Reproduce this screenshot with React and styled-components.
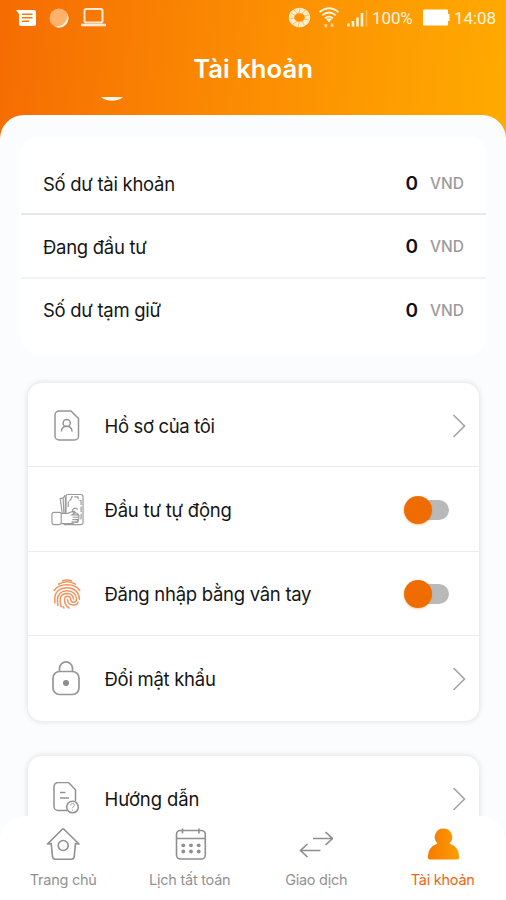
import React, { useState } from 'react';
import styled, { createGlobalStyle } from 'styled-components';

const balances = [
  { label: 'Số dư tài khoản', value: 0 },
  { label: 'Đang đầu tư', value: 0 },
  { label: 'Số dư tạm giữ', value: 0 },
];

const MessageIcon = () => (
  <svg width="20" height="18" viewBox="0 0 20 18" fill="none">
    <path d="M0 1h18q2 0 2 2v12q0 2-2 2H5q-2 0-2-2V5Z" fill="#fff" />
    <path d="M6 5.2h10.5M6 8.7h10.5M6 12.2h7" stroke="#f57a05" strokeWidth="1.5" />
  </svg>
);

const MoonIcon = () => (
  <svg width="20" height="20" viewBox="0 0 20 20">
    <circle cx="10" cy="10" r="9.5" fill="#ffb26c" />
    <path d="M18 5a9.5 9.5 0 0 1-13 13.2A11 11 0 0 0 18 5Z" fill="#fff1dc" />
  </svg>
);

const LaptopIcon = () => (
  <svg width="25" height="19" viewBox="0 0 25 19" fill="none" stroke="#ffe9d6">
    <rect x="3.5" y="1" width="18" height="13.5" rx="1.8" strokeWidth="2" />
    <path d="M0 17h25" strokeWidth="2.6" />
  </svg>
);

const RingIcon = () => (
  <svg width="23" height="21" viewBox="0 0 23 21" fill="none" stroke="#ffeccf">
    <ellipse cx="11.5" cy="10.5" rx="8" ry="7" strokeWidth="5.4" />
    <path
      d="M3 6l5 3M6 3l4 4M12 1l-1 5M17 3l-3 4M21 8l-5 1M21 13l-5-1M16 18l-2-4M10 20l1-5M5 17l4-3M2 12l5-1"
      stroke="#fba02a"
      strokeWidth="0.6"
    />
  </svg>
);

const WifiIcon = () => (
  <svg width="20" height="21" viewBox="0 0 20 21" fill="none" stroke="#fff3de" strokeWidth="1.8">
    <path d="M.5 5.2q9.5-8 19 0M3.3 8.3q6.7-5.5 13.4 0M6 11.2q4-3.2 8 0" />
    <path d="M6.8 11.5h6.4L10 15.5Z" fill="#fff" stroke="none" />
    <path d="M5.5 17.5l1.5 2 1-2M12 19.5l1-2 1.5 2" stroke="#ffd391" />
  </svg>
);

const SignalIcon = () => (
  <svg width="21" height="18" viewBox="0 0 21 18" fill="none" stroke="#fff3de" strokeWidth="2.6">
    <path d="M1.5 17.5v-3M6 17.5v-5.5M10.5 17.5V8.5M15 17.5V4" />
    <path d="M19.5 17.5V1" stroke="#ffb84a" strokeWidth="1.6" />
  </svg>
);

const BatteryIcon = () => (
  <svg width="27" height="17" viewBox="0 0 27 17" fill="#fff">
    <path d="M1 .5h23a1 1 0 0 1 1 1V5h1.500v7H25v3.500a1 1 0 0 1-1 1H1a1 1 0 0 1-1-1v-14a1 1 0 0 1 1-1Z" />
  </svg>
);

const ProfileIcon = () => (
  <svg width="34" height="34" viewBox="0 0 34 34" fill="none" stroke="#959595" strokeWidth="1.5">
    <path d="M9 2h12l7.5 7.5V27a4 4 0 0 1-4 4H9a4 4 0 0 1-4-4V6a4 4 0 0 1 4-4Z" />
    <circle cx="16.7" cy="14" r="3.6" />
    <path d="M11.3 22.5q.5-5.2 5.4-5.2t5.4 5.2" />
  </svg>
);

const MoneyIcon = () => (
  <svg width="33" height="34" viewBox="0 0 34 34" fill="none" stroke="#9a9a9a" strokeWidth="1.2">
    <path d="M15.5 20V3q0-2 2-2h13q2.5 0 2.5 2.5v26q0 2.5-2.5 2.5H13" />
    <path d="M17.8 14V7.5q3-.2 3.6-4h6.2q.5 3.800 3.400 4V26q-3 .4-3.500 3.500H22" strokeDasharray="6 1.5" />
    <path d="M14.5 1.5 12.5 5l.8 15M12 4.5l-2.5.8L11.5 20M14.8 3v17" />
    <path d="M27.5 16.5q-3-2.800-5 0-1.400 3.200 2.500 3.500 3.500.5 3 3.500" />
    <rect x="1" y="19.5" width="9.5" height="12.5" rx="2" />
    <path d="M10.5 20.5h7l4.500-2q2-.6 3 1l-3.500 2.500h6.700q1.500 1.200 0 2.500h-6M28 24.500q1.500 1.200 0 2.500h-6M27.500 27q1 1.500-.7 2.500H21M10.500 31h13" />
  </svg>
);

const FingerprintIcon = () => (
  <svg width="28" height="30" viewBox="0 0 28 30" fill="none" stroke="#f4925a" strokeWidth="1.5" strokeLinecap="round">
    <path d="M9.5 1.8q4.5-1.8 9 0M5.5 5.2q8.5-4.8 17 0" />
    <path d="M1.2 11.5Q5 5.8 14 5.8t12.8 5.7" />
    <path d="M1.8 24v-4.5C1.8 12.5 7 8.8 14 8.8s12.3 4.5 12.3 11.5" />
    <path d="M5 26.5q-.6-2.5-.5-6C4.8 15 8.5 11.7 14 11.7s9.5 3.5 9.5 8.3q0 3.2-2.8 3.2t-3.1-3.2q-.2-2.8-3.1-2.8t-3 3.5q.2 5.5 4.5 8.3" />
    <path d="M8.2 27.800q-1.800-5-.8-9 1.300-4.300 6.600-4.300 6 .2 6.500 5.500" />
    <path d="M14.5 20.500q.1 5.800 6.500 5.500 3 0 4-2.500M11 29q-.6-.8-.9-1.500" />
  </svg>
);

const LockIcon = () => (
  <svg width="34" height="36" viewBox="0 0 34 36" fill="none" stroke="#979797" strokeWidth="1.7">
    <rect x="3" y="10.5" width="26" height="23" rx="6.5" />
    <path d="M9.5 10.5V7.400a6.500 6.500 0 0 1 13 0v3.100" />
    <circle cx="16" cy="22" r="3" fill="#8c8c8c" stroke="none" />
  </svg>
);

const GuideIcon = () => (
  <svg width="34" height="34" viewBox="0 0 34 34" fill="none" stroke="#929292" strokeWidth="1.5">
    <path d="M17 28.500H8a4 4 0 0 1-4-4v-20a4 4 0 0 1 4-4h10.500l7 7.300V19" />
    <path d="M10 10.500h5.500M10 16h9" />
    <circle cx="22.500" cy="25" r="5.800" />
    <path d="M20.500 23.500q0-2 2-2t2 1.700q0 1.200-2 2.300v.7M22.500 27.500v1.200" strokeWidth="1" stroke="#aaa" />
  </svg>
);

const Chevron = () => (
  <svg width="14" height="26" viewBox="0 0 14 26" fill="none" stroke="#a3a3a3" strokeWidth="1.6">
    <path d="M1.5 2 12.5 13 1.5 24" />
  </svg>
);

const HomeIcon = () => (
  <svg width="34" height="34" viewBox="0 0 34 34" fill="none" stroke="#8f8f8f" strokeWidth="1.6" strokeLinejoin="round">
    <path d="M1.5 17 16.5 2q.6-.5 1.200 0L33 17l-3.500-.5-1.300 13q-.3 2.800-3 2.800H9.500q-2.700 0-3-2.800l-1.300-13Z" />
    <circle cx="17.2" cy="18.5" r="5" />
  </svg>
);

const CalendarIcon = () => (
  <svg width="34" height="34" viewBox="0 0 34 34" fill="none" stroke="#8f8f8f" strokeWidth="1.6">
    <rect x="3.5" y="3.5" width="28.8" height="28.5" rx="4" />
    <path d="M3.5 11.5h28.8M9.5 1.5v5M26 1.5v5" />
    <g fill="#8f8f8f" stroke="none">
      {[10.3, 18, 25.7].map((x) => (
        <React.Fragment key={x}>
          <circle cx={x} cy="18.3" r="1.9" />
          <circle cx={x} cy="24.5" r="1.9" />
        </React.Fragment>
      ))}
    </g>
  </svg>
);

const TransferIcon = () => (
  <svg width="34" height="34" viewBox="0 0 34 34" fill="none" stroke="#8f8f8f" strokeWidth="1.7">
    <path d="M14 11.500h19.500M26.500 5l7 6.500-7 6.500M21.500 23.500H2M8.500 17l-7 6.500 7 6.500" />
  </svg>
);

const UserIcon = () => (
  <svg width="34" height="34" viewBox="0 0 34 34">
    <defs>
      <linearGradient id="userFill" x1="0" x2="1">
        <stop offset="0" stopColor="#f57a00" />
        <stop offset="1" stopColor="#ff9d00" />
      </linearGradient>
    </defs>
    <path
      d="M17.500 1.500a8.700 8.700 0 0 0-6 15Q2 20 1.800 30q0 2.500 2.500 2.500h26.400q2.500 0 2.500-2.500-.2-10-9.700-13.500a8.700 8.700 0 0 0-6-15Z"
      fill="url(#userFill)"
    />
  </svg>
);

const AutoSwitch = ({ label }) => {
  const [on, setOn] = useState(false);
  return (
    <Track type="button" role="switch" aria-checked={on} aria-label={label} $on={on} onClick={() => setOn(!on)}>
      <Thumb />
    </Track>
  );
};

const App = () => (
  <Screen>
    <GlobalStyle />
    <Header>
      <StatusBar>
        <StatusLeft>
          <MessageIcon />
          <MoonIcon />
          <LaptopIcon />
        </StatusLeft>
        <StatusRight>
          <RingIcon />
          <WifiIcon />
          <SignalIcon />
          <StatusText $width="43px">100%</StatusText>
          <BatteryIcon />
          <StatusText $width="42px">14:08</StatusText>
        </StatusRight>
      </StatusBar>
      <Title>Tài khoản</Title>
      <AvatarEdge width="22" height="4" viewBox="0 0 22 4">
        <path d="M0 0h22Q18 3.800 11 3.800T0 0Z" fill="#fff3e4" />
      </AvatarEdge>
    </Header>

    <Sheet>
      <BalanceCard>
        {balances.map(({ label, value }) => (
          <BalanceRow key={label}>
            <Label>{label}</Label>
            <Amount>{value}</Amount>
            <Currency>VND</Currency>
          </BalanceRow>
        ))}
      </BalanceCard>

      <MenuCard>
        <MenuRow>
          <IconSlot><ProfileIcon /></IconSlot>
          <Label $spacing="-0.35px">Hồ sơ của tôi</Label>
          <Chevron />
        </MenuRow>
        <MenuRow>
          <IconSlot><MoneyIcon /></IconSlot>
          <Label $spacing="-0.2px">Đầu tư tự động</Label>
          <AutoSwitch label="Đầu tư tự động" />
        </MenuRow>
        <MenuRow>
          <IconSlot><FingerprintIcon /></IconSlot>
          <Label>Đăng nhập bằng vân tay</Label>
          <AutoSwitch label="Đăng nhập bằng vân tay" />
        </MenuRow>
        <MenuRow>
          <IconSlot><LockIcon /></IconSlot>
          <Label>Đổi mật khẩu</Label>
          <Chevron />
        </MenuRow>
      </MenuCard>

      <MenuCard>
        <MenuRow>
          <IconSlot><GuideIcon /></IconSlot>
          <Label $spacing="-0.1px">Hướng dẫn</Label>
          <Chevron />
        </MenuRow>
      </MenuCard>
    </Sheet>

    <TabBar>
      <Tab><HomeIcon />Trang chủ</Tab>
      <Tab><CalendarIcon />Lịch tất toán</Tab>
      <Tab><TransferIcon />Giao dịch</Tab>
      <Tab $active><UserIcon />Tài khoản</Tab>
    </TabBar>
  </Screen>
);

// --- STYLES ---

const GlobalStyle = createGlobalStyle`
  * { box-sizing: border-box; }
  body {
    margin: 0;
    font-family: Inter, Roboto, sans-serif;
  }
  svg { display: block; flex: none; }
`;

const Screen = styled.div`
  display: flex;
  flex-direction: column;
  width: 506px;
  height: 900px;
  overflow: hidden;
  background: linear-gradient(97deg, #f56c02 0%, #fb8a02 45%, #ffab00 100%) top / 100% 150px no-repeat #fafcfe;
`;

const Header = styled.header`
  flex: none;
  height: 115px;
`;

const StatusBar = styled.div`
  display: flex;
  justify-content: space-between;
  height: 35px;
  padding: 0 10px 0 16px;
`;

const StatusLeft = styled.div`
  display: flex;
  align-items: center;
  gap: 12.5px;
`;

const StatusRight = styled.div`
  display: flex;
  align-items: center;
  gap: 8px;
`;

const StatusText = styled.span`
  width: ${(p) => p.$width};
  margin-left: -4px;
  color: #fff3e0;
  font: 400 17px Roboto, sans-serif;
  letter-spacing: -0.1px;
  white-space: nowrap;
`;

const Title = styled.h1`
  margin: 0;
  height: 62px;
  padding-top: 18px;
  color: #fff;
  font-size: 25.7px;
  font-weight: 600;
  line-height: 32px;
  text-align: center;
`;

const AvatarEdge = styled.svg`
  margin-left: 101px;
`;

const Sheet = styled.main`
  display: flex;
  flex-direction: column;
  flex: 1;
  min-height: 0;
  overflow: hidden;
  padding: 22px 20px 0 21px;
  border-radius: 24px 24px 0 0;
  background: #fafcfe;
`;

const BalanceCard = styled.section`
  flex: none;
  height: 217px;
  padding-top: 15px;
  border-radius: 18px;
  background: #fff;
  box-shadow: 0 0 6px #fff;
`;

const BalanceRow = styled.div`
  display: flex;
  align-items: center;
  height: 63.3px;
  padding: 2px 22px 0;

  &:not(:last-child) { border-bottom: 2px solid #e8e8e8; }
  &:nth-child(2) { border-color: #f1f2f4; }
  &:last-child { padding-top: 0; }
`;

const Label = styled.span`
  flex: 1;
  color: #151515;
  font-size: 18.5px;
  font-weight: 400;
  letter-spacing: ${(p) => p.$spacing || '-0.28px'};
  white-space: nowrap;
`;

const Amount = styled.span`
  color: #111;
  font-size: 19px;
  font-weight: 600;
`;

const Currency = styled.span`
  width: 34px;
  margin-left: 12px;
  color: #9b9b9b;
  font-size: 15.5px;
  font-weight: 500;
`;

const MenuCard = styled.section`
  flex: none;
  margin: 29px 7px 0 7px;
  border-radius: 14px;
  background: #fff;
  box-shadow: 0 0 6px rgba(0, 0, 0, 0.14);

  & + & { margin-top: 35px; }
`;

const MenuRow = styled.div`
  display: flex;
  align-items: center;
  height: 84.4px;
  padding: 2px 13px 0 22px;

  &:not(:last-child) { border-bottom: 1.5px solid #ececec; }
`;

const IconSlot = styled.span`
  display: flex;
  justify-content: center;
  width: 34px;
  margin-right: 20.5px;
`;

const Track = styled.button`
  display: flex;
  align-items: center;
  justify-content: ${(p) => (p.$on ? 'flex-end' : 'flex-start')};
  width: 42px;
  height: 20px;
  margin: -1px 17px 0 0;
  padding: 0;
  border: 0;
  border-radius: 10px;
  background: ${(p) => (p.$on ? '#f9b98a' : '#b9b9b9')};
  cursor: pointer;
`;

const Thumb = styled.span`
  flex: none;
  width: 28px;
  height: 28px;
  margin: 0 -3px;
  border-radius: 50%;
  background: #ef6c00;
  box-shadow: 0 1px 2px rgba(239, 108, 0, 0.35);
`;

const TabBar = styled.nav`
  display: flex;
  flex: none;
  height: 84px;
  border-radius: 26px 26px 0 0;
  background: #fff;
  z-index: 1;
`;

const Tab = styled.a`
  display: flex;
  flex: 1;
  flex-direction: column;
  align-items: center;
  gap: 9px;
  padding-top: 11px;
  color: ${(p) => (p.$active ? '#f2650f' : '#929292')};
  font-size: 14.5px;
  letter-spacing: -0.25px;
  line-height: 20px;
  white-space: nowrap;
`;

export default App;
